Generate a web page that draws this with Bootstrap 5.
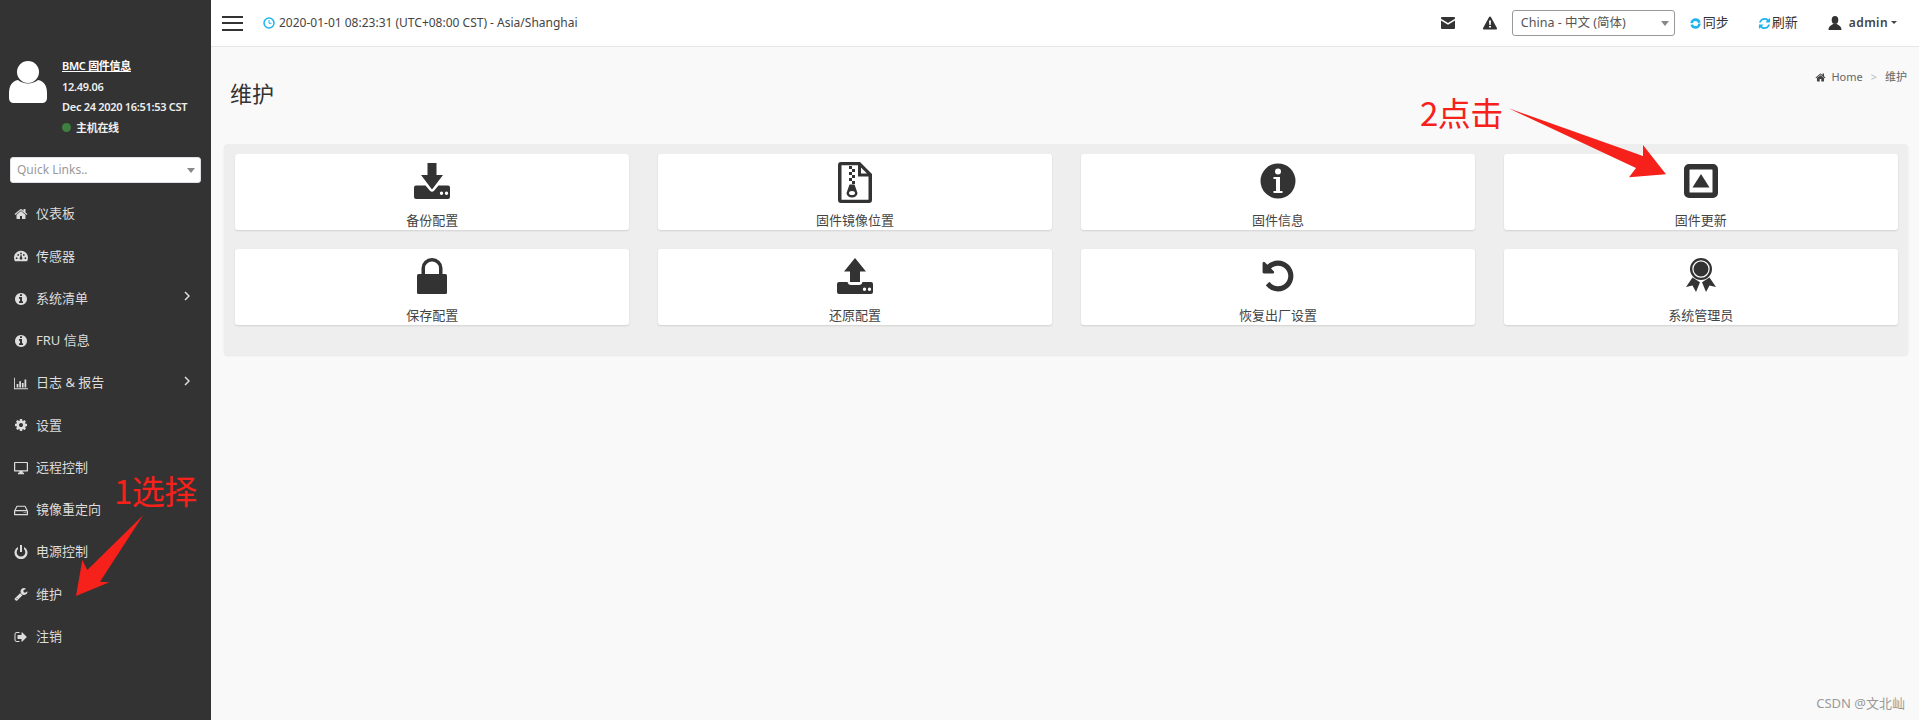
<!DOCTYPE html>
<html lang="zh-CN">
<head>
<meta charset="UTF-8">
<title>维护</title>
<link href="https://cdn.jsdelivr.net/npm/bootstrap@5.3.0/dist/css/bootstrap.min.css" rel="stylesheet">
<style>
    html, body { height: 100%; }
    body {
        font-family: "Noto Sans", "Noto Sans CJK SC", sans-serif;
        font-size: 12px;
        color: #333;
        background-color: #f9f9f9;
        overflow: hidden;
    }
    .shell { height: 720px; position: relative; }
    .side-bar { width: 211px; background-color: #333; color: #ddd; flex-shrink: 0; }
    .profile { padding: 56px 0 0 9px; height: 157px; gap: 15px; }
    .profile svg { width: 38px; height: 44px; margin-top: 5px; fill: #fff; }
    .profile-info { font-size: 11px; line-height: 20.5px; font-weight: 600; color: #eee; letter-spacing: -0.3px; }
    .profile-info a { color: #fff; }
    .status-dot { width: 9px; height: 9px; border-radius: 50%; background-color: #3f7f3f; display: inline-block; margin-right: 5px; }
    .quick-box { margin: 0 10px 10px 10px; }
    .quick-box select { height: 26px; font-size: 12px; padding: 0 6px; color: #999; border-radius: 3px; font-family: inherit; }
    .quick-box select, .lang-pick {
        background-image: url("data:image/svg+xml,%3csvg xmlns='http://www.w3.org/2000/svg' viewBox='0 0 8 5'%3e%3cpath fill='%23888' d='M0 0h8L4 5z'/%3e%3c/svg%3e");
        background-size: 8px 5px;
        background-position: right 5px center;
    }
    .side-link { height: 42.25px; padding-left: 14px; color: #ddd; font-size: 13px; text-decoration: none; }
    .side-link svg.ico { width: 14px; height: 14px; fill: #ddd; margin-right: 8px; flex-shrink: 0; }
    .side-link .chev { margin-left: auto; margin-right: 21px; margin-top: -5px; width: 6px; height: 10px; fill: none; stroke: #ddd; stroke-width: 1.5; }
    .top-bar { height: 47px; background-color: #fff; border-bottom: 1px solid #e7e7e7; padding: 0 22px 0 11px; }
    .burger { width: 21px; height: 15px; border-top: 2px solid #333; border-bottom: 2px solid #333; position: relative; margin-right: 20px; }
    .burger::after { content: ""; position: absolute; left: 0; right: 0; top: 4.5px; border-top: 2px solid #333; }
    .clock-text { font-size: 12px; color: #444; }
    .top-ico { width: 14px; height: 14px; fill: #333; }
    .lang-pick { width: 163px; height: 26px; font-size: 12.5px; padding: 0 8px; color: #555; border-color: #999; border-radius: 3px; margin: 0 14px 0 15px; font-family: inherit; }
    .sync-link { font-size: 13px; color: #333; gap: 1px; }
    .sync-link svg { width: 13px; height: 13px; fill: #1eb4f0; }
    .user-name { font-weight: 600; letter-spacing: .4px; color: #444; font-size: 12px; }
    .page-head { height: 97px; padding: 0 12px 0 19px; }
    .page-title { font-size: 22px; font-weight: 400; margin: 33px 0 0 0; color: #333; }
    .crumbs { font-size: 11px; color: #666; margin-top: 22px; gap: 8px; }
    .crumbs svg { width: 11px; height: 11px; fill: #444; margin-right: 5px; }
    .crumbs .sep { color: #bbb; }
    .tile-panel { margin: 0 11px 0 13px; height: 211px; padding: 10px 10px 0 11px; background-color: #eee; border-radius: 4px; box-shadow: 0 1px 2px rgba(0,0,0,.08); }
    .tile-row { --bs-gutter-x: 28.4px; --bs-gutter-y: 19px; }
    .tile { height: 76px; border: 0; border-radius: 3px; box-shadow: 0 1px 2px rgba(0,0,0,.12); padding-top: 9px; overflow: hidden; }
    .tile svg { width: 36px; height: 36px; fill: #333; display: block; margin: 0 auto; }
    .tile svg.tall-icon { width: 34px; height: 41px; margin-top: -1px; margin-bottom: -4px; }
    .tile-label { margin-top: 12px; font-size: 13px; line-height: 18px; color: #444; }
    .arrow-layer { position: absolute; inset: 0; width: 1919px; height: 720px; pointer-events: none; }
    .note-red { position: absolute; font-size: 33px; line-height: 1; color: #f5211a; font-family: "Noto Sans CJK SC", sans-serif; letter-spacing: -0.5px; }
    .note-one { left: 114px; top: 474px; }
    .note-two { left: 1420px; top: 96px; }
    .mark-csdn { position: absolute; right: 14px; bottom: 7px; font-size: 13px; color: #999; }
</style>
</head>
<body>
<div class="shell d-flex">
    <aside class="side-bar d-flex flex-column">
        <div class="profile d-flex">
            <svg viewBox="0 0 38 44"><circle cx="19" cy="11" r="11"/><path d="M9 19c5 4.500 15 4.500 20 0 6 1 9 6 9 13v5c0 3-2 5-5 5H5c-3 0-5-2-5-5v-5c0-7 3-12 9-13z"/></svg>
            <div class="profile-info">
                <a href="#">BMC 固件信息</a><br>
                12.49.06<br>
                Dec 24 2020 16:51:53 CST<br>
                <span class="status-dot"></span>主机在线
            </div>
        </div>
        <div class="quick-box">
            <select class="form-select"><option>Quick Links..</option></select>
        </div>
        <nav class="nav flex-column">
            <a class="side-link d-flex align-items-center" href="#"><svg class="ico" viewBox="0 0 1792 1792"><path d="M1472 992v480q0 26-19 45t-45 19h-384v-384h-256v384h-384q-26 0-45-19t-19-45v-480q0-1 .5-3t.5-3l575-474 575 474q1 2 1 6zm223-69l-62 74q-8 9-21 11h-3q-13 0-21-7l-692-577-692 577q-12 8-24 7-13-2-21-11l-62-74q-8-10-7-23.500t11-21.500l719-599q32-26 76-26t76 26l244 204v-195q0-14 9-23t23-9h192q14 0 23 9t9 23v408l219 182q10 8 11 21.500t-7 23.500z"/></svg>仪表板</a>
            <a class="side-link d-flex align-items-center" href="#"><svg class="ico" viewBox="0 0 16 16"><path fill-rule="evenodd" d="M8 2a8 8 0 0 0-8 8c0 1.500.4 2.800 1 4h14c.6-1.200 1-2.500 1-4a8 8 0 0 0-8-8zM3 9.500a1 1 0 1 1 0 2 1 1 0 0 1 0-2zm1.800-3.700a1 1 0 1 1 0 2 1 1 0 0 1 0-2zM8 4a1 1 0 1 1 0 2 1 1 0 0 1 0-2zm3.200 1.800a1 1 0 1 1 0 2 1 1 0 0 1 0-2zm1.800 3.700a1 1 0 1 1 0 2 1 1 0 0 1 0-2zM7 9.500l.6-3h.8l.6 3a1.500 1.500 0 1 1-2 0z"/></svg>传感器</a>
            <a class="side-link d-flex align-items-center" href="#"><svg class="ico" viewBox="0 0 1792 1792"><path d="M1152 1376v-160q0-14-9-23t-23-9h-96v-512q0-14-9-23t-23-9h-320q-14 0-23 9t-9 23v160q0 14 9 23t23 9h96v320h-96q-14 0-23 9t-9 23v160q0 14 9 23t23 9h448q14 0 23-9t9-23zm-128-896v-160q0-14-9-23t-23-9h-192q-14 0-23 9t-9 23v160q0 14 9 23t23 9h192q14 0 23-9t9-23zm640 416q0 209-103 385.500t-279.500 279.500-385.500 103-385.500-103-279.500-279.500-103-385.500 103-385.500 279.500-279.500 385.500-103 385.500 103 279.500 279.500 103 385.500z"/></svg>系统清单<svg class="chev" viewBox="0 0 6 10"><path d="M1 1l4 4-4 4"/></svg></a>
            <a class="side-link d-flex align-items-center" href="#"><svg class="ico" viewBox="0 0 1792 1792"><path d="M1152 1376v-160q0-14-9-23t-23-9h-96v-512q0-14-9-23t-23-9h-320q-14 0-23 9t-9 23v160q0 14 9 23t23 9h96v320h-96q-14 0-23 9t-9 23v160q0 14 9 23t23 9h448q14 0 23-9t9-23zm-128-896v-160q0-14-9-23t-23-9h-192q-14 0-23 9t-9 23v160q0 14 9 23t23 9h192q14 0 23-9t9-23zm640 416q0 209-103 385.500t-279.500 279.500-385.500 103-385.500-103-279.500-279.500-103-385.500 103-385.500 279.500-279.500 385.500-103 385.500 103 279.500 279.500 103 385.500z"/></svg>FRU 信息</a>
            <a class="side-link d-flex align-items-center" href="#"><svg class="ico" viewBox="0 0 16 14"><path d="M0 1h1v12h15v1H0zM3 8h2v4H3zM6 5h2v7H6zM9 7h2v5H9zM12 3h2v9h-2z"/></svg>日志 &amp; 报告<svg class="chev" viewBox="0 0 6 10"><path d="M1 1l4 4-4 4"/></svg></a>
            <a class="side-link d-flex align-items-center" href="#"><svg class="ico" viewBox="0 0 1792 1792"><path d="M1152 896q0-106-75-181t-181-75-181 75-75 181 75 181 181 75 181-75 75-181zm512-109v222q0 12-8 23t-20 13l-185 28q-19 54-39 91 35 50 107 138 10 12 10 25t-9 23q-27 37-99 108t-94 71q-12 0-26-9l-138-108q-44 23-91 38-16 136-29 186-7 28-36 28h-222q-14 0-24.500-8.500t-11.500-21.500l-28-184q-49-16-90-37l-141 107q-10 9-25 9-14 0-25-11-126-114-165-168-7-10-7-23 0-12 8-23 15-21 51-66.500t54-70.500q-27-50-41-99l-183-27q-13-2-21-12.500t-8-23.500v-222q0-12 8-23t19-13l186-28q14-46 39-92-40-57-107-138-10-12-10-24 0-10 9-23 26-36 98.500-107.500t94.500-71.500q13 0 26 10l138 107q44-23 91-38 16-136 29-186 7-28 36-28h222q14 0 24.500 8.500t11.500 21.500l28 184q49 16 90 37l142-107q9-9 24-9 13 0 25 10 129 119 165 170 7 8 7 22 0 12-8 23-15 21-51 66.500t-54 70.500q26 50 41 98l183 28q13 2 21 12.500t8 23.500z"/></svg>设置</a>
            <a class="side-link d-flex align-items-center" href="#"><svg class="ico" viewBox="0 0 16 14"><path fill-rule="evenodd" d="M1 0h14a1 1 0 0 1 1 1v9a1 1 0 0 1-1 1H10v1.500h1.500V14h-7v-1.500H6V11H1a1 1 0 0 1-1-1V1a1 1 0 0 1 1-1zm.4 1.400v8.200h13.200V1.400z"/></svg>远程控制</a>
            <a class="side-link d-flex align-items-center" href="#"><svg class="ico" viewBox="0 0 16 14"><path fill-rule="evenodd" d="M3 2h10l3 6v4a1 1 0 0 1-1 1H1a1 1 0 0 1-1-1V8zm.8 1.300L1.900 7h12.200l-1.900-3.700zM1.400 8.400v3.200h13.200V8.400zM11 9.500h1.200v1H11zm2 0h1v1h-1z"/></svg>镜像重定向</a>
            <a class="side-link d-flex align-items-center" href="#"><svg class="ico" viewBox="0 0 14 14"><path d="M6 0h2v7H6z"/><path d="M4 1.900v2.200a4.300 4.300 0 1 0 6 0V1.900a6.500 6.500 0 1 1-6 0z"/></svg>电源控制</a>
            <a class="side-link d-flex align-items-center" href="#"><svg class="ico" viewBox="0 0 1792 1792"><path d="M448 1472q0-26-19-45t-45-19-45 19-19 45 19 45 45 19 45-19 19-45zm644-420l-682 682q-37 37-90 37-52 0-91-37l-106-108q-38-36-38-90 0-53 38-91l681-681q39 98 114.500 173.500t173.500 114.500zm634-435q0 39-23 106-47 134-164.500 217.500t-258.500 83.500q-185 0-316.500-131.500t-131.500-316.500 131.500-316.500 316.500-131.500q58 0 121.500 16.500t107.500 46.500q16 11 16 28t-16 28l-293 169v224l193 107q5-3 79-48.500t135.500-81 70.500-35.500q15 0 23.500 10t8.500 25z"/></svg>维护</a>
            <a class="side-link d-flex align-items-center" href="#"><svg class="ico" viewBox="0 0 1792 1792"><path d="M704 1440q0 4 1 20t.5 26.500-3 23.500-10 19.500-20.500 6.500h-320q-119 0-203.500-84.500t-84.500-203.500v-704q0-119 84.500-203.500t203.500-84.500h320q13 0 22.500 9.500t9.500 22.500q0 4 1 20t.5 26.500-3 23.500-10 19.500-20.500 6.500h-320q-66 0-113 47t-47 113v704q0 66 47 113t113 47h312l11.500 1 11.500 3 8 5.500 7 9 2 13.500zm928-544q0 26-19 45l-544 544q-19 19-45 19t-45-19-19-45v-288h-448q-26 0-45-19t-19-45v-384q0-26 19-45t45-19h448v-288q0-26 19-45t45-19 45 19l544 544q19 19 19 45z"/></svg>注销</a>
        </nav>
    </aside>

    <main class="flex-grow-1">
        <header class="top-bar d-flex align-items-center">
            <span class="burger"></span>
            <svg class="me-1" width="12" height="12" viewBox="0 0 12 12" fill="none" stroke="#1eb4f0" stroke-width="1.500"><circle cx="6" cy="6" r="5"/><path d="M6 3v3.300h2.500" stroke-width="1"/></svg>
            <span class="clock-text">2020-01-01 08:23:31 (UTC+08:00 CST) - Asia/Shanghai</span>
            <div class="ms-auto d-flex align-items-center">
                <svg class="top-ico" viewBox="0 0 14 12"><path d="M0 1a1 1 0 0 1 1-1h12a1 1 0 0 1 1 1v.800L7 6 0 1.800z"/><path d="M0 3.500L7 7.700l7-4.200V11a1 1 0 0 1-1 1H1a1 1 0 0 1-1-1z"/></svg>
                <svg class="top-ico" style="margin-left:28px" viewBox="0 0 14 13"><path fill-rule="evenodd" d="M7 0c.4 0 .7.200.9.500l6 11c.3.700-.1 1.500-.9 1.500H1c-.8 0-1.200-.8-.9-1.500l6-11C6.300.2 6.600 0 7 0zM6 4l.3 4.500h1.400L8 4zm0 5.500V11h2V9.500z"/></svg>
                <select class="form-select lang-pick"><option>China - 中文 (简体)</option></select>
                <a class="sync-link d-flex align-items-center text-decoration-none" href="#"><svg viewBox="0 0 12 12"><circle cx="6" cy="6" r="3.600" fill="none" stroke="#1eb4f0" stroke-width="2.400" stroke-dasharray="10 1.300"/></svg>同步</a>
                <a class="sync-link d-flex align-items-center text-decoration-none" style="margin-left:29px" href="#"><svg viewBox="0 0 1792 1792"><path d="M1639 1056q0 5-1 7-64 268-268 434.500t-478 166.500q-146 0-282.500-55t-243.500-157l-129 129q-19 19-45 19t-45-19-19-45v-448q0-26 19-45t45-19h448q26 0 45 19t19 45-19 45l-137 137q71 66 161 102t187 36q134 0 250-65t186-179q11-17 53-117 8-23 30-23h192q13 0 22.500 9.500t9.500 22.500zm25-800v448q0 26-19 45t-45 19h-448q-26 0-45-19t-19-45 19-45l138-138q-148-137-349-137-134 0-250 65t-186 179q-11 17-53 117-8 23-30 23h-199q-13 0-22.500-9.500t-9.500-22.500v-7q65-268 270-434.500t480-166.500q146 0 284 55.500t245 156.500l130-129q19-19 45-19t45 19 19 45z"/></svg>刷新</a>
                <svg class="top-ico" style="margin-left:30px;margin-right:7px" viewBox="0 0 14 14"><ellipse cx="7" cy="4" rx="3.300" ry="4"/><path d="M5 7.500c1 .8 3 .8 4 0 .3 2 4.500 1.500 4.500 6.500H.5c0-5 4.200-4.500 4.500-6.500z"/></svg>
                <span class="user-name dropdown-toggle">admin</span>
            </div>
        </header>

        <div class="page-head d-flex justify-content-between">
            <h1 class="page-title">维护</h1>
            <div class="crumbs d-flex align-items-start">
                <span class="d-flex align-items-center"><svg viewBox="0 0 1792 1792"><path d="M1472 992v480q0 26-19 45t-45 19h-384v-384h-256v384h-384q-26 0-45-19t-19-45v-480q0-1 .5-3t.5-3l575-474 575 474q1 2 1 6zm223-69l-62 74q-8 9-21 11h-3q-13 0-21-7l-692-577-692 577q-12 8-24 7-13-2-21-11l-62-74q-8-10-7-23.500t11-21.500l719-599q32-26 76-26t76 26l244 204v-195q0-14 9-23t23-9h192q14 0 23 9t9 23v408l219 182q10 8 11 21.500t-7 23.500z"/></svg>Home</span>
                <span class="sep">&gt;</span>
                <span>维护</span>
            </div>
        </div>

        <section class="tile-panel">
            <div class="row tile-row">
                <div class="col-3"><div class="card tile text-center">
                    <svg viewBox="0 0 36 36"><path d="M13.500 0h9v12H29L18 26.500 7 12h6.500z"/><path fill-rule="evenodd" d="M2 22.500h9.500l4.700 5.500c1 1.100 2.600 1.100 3.600 0l4.700-5.500H34a2 2 0 0 1 2 2V34a2 2 0 0 1-2 2H2a2 2 0 0 1-2-2v-9.500a2 2 0 0 1 2-2zm25.500 6a1.700 1.700 0 1 0 0 3.400 1.700 1.700 0 0 0 0-3.400zm5 0a1.700 1.700 0 1 0 0 3.400 1.700 1.700 0 0 0 0-3.400z"/></svg>
                    <div class="tile-label">备份配置</div>
                </div></div>
                <div class="col-3"><div class="card tile text-center">
                    <svg class="tall-icon" viewBox="0 0 34 41"><path fill-rule="evenodd" d="M3 0h19l12 12v26a3 3 0 0 1-3 3H3a3 3 0 0 1-3-3V3a3 3 0 0 1 3-3zm.5 3.300v34.400h27V14.500H20V3.300zM23 5.500V11.500h6z"/><path d="M11 4h3v3h-3zM14 7h3v3h-3zM11 10h3v3h-3zM14 13h3v3h-3zM11 16h3v3h-3zM14 19h3v3h-3z"/><path fill-rule="evenodd" d="M11.500 22.500h5L19.500 31a5.500 4.500 0 1 1-11 0zM14 29a3 2 0 1 0 0 4 3 2 0 0 0 0-4z"/></svg>
                    <div class="tile-label">固件镜像位置</div>
                </div></div>
                <div class="col-3"><div class="card tile text-center">
                    <svg viewBox="0 0 36 36"><path fill-rule="evenodd" d="M18 .5a17.500 17.500 0 1 1 0 35 17.500 17.500 0 0 1 0-35zM18 5.500a3 3 0 1 0 0 6 3 3 0 0 0 0-6zm-4.500 8.500v2h2.500v12h-2.500v2h9v-2H20V14z"/></svg>
                    <div class="tile-label">固件信息</div>
                </div></div>
                <div class="col-3"><div class="card tile text-center">
                    <svg viewBox="0 0 36 36"><path fill-rule="evenodd" d="M6 1h24a5 5 0 0 1 5 5v24a5 5 0 0 1-5 5H6a5 5 0 0 1-5-5V6a5 5 0 0 1 5-5zm1 5.500a.5.5 0 0 0-.5.500v22a.5.5 0 0 0 .5.500h22a.5.5 0 0 0 .5-.500V7a.5.5 0 0 0-.5-.500z"/><path d="M18 11L26.500 24.500h-17z"/></svg>
                    <div class="tile-label">固件更新</div>
                </div></div>
                <div class="col-3"><div class="card tile text-center">
                    <svg viewBox="0 0 36 36"><path d="M7.500 16v-6a10.500 10 0 0 1 21 0v6h-3.500v-6a7 6.500 0 0 0-14 0v6z"/><rect x="3" y="16" width="30" height="20" rx="1.500"/></svg>
                    <div class="tile-label">保存配置</div>
                </div></div>
                <div class="col-3"><div class="card tile text-center">
                    <svg viewBox="0 0 36 36"><path d="M18 0l11 13.500h-6V24h-10V13.500H7z"/><path fill-rule="evenodd" d="M2 24h8.500c.5 2 1.500 3 3.500 3h8c2 0 3-1 3.500-3H34a2 2 0 0 1 2 2v8a2 2 0 0 1-2 2H2a2 2 0 0 1-2-2v-8a2 2 0 0 1 2-2zm25.500 5.500a1.700 1.700 0 1 0 0 3.400 1.700 1.700 0 0 0 0-3.400zm5 0a1.700 1.700 0 1 0 0 3.400 1.700 1.700 0 0 0 0-3.400z"/></svg>
                    <div class="tile-label">还原配置</div>
                </div></div>
                <div class="col-3"><div class="card tile text-center">
                    <svg viewBox="0 0 1792 1792"><path d="M1664 896q0 156-61 298t-164 245-245 164-298 61q-172 0-327-72.500t-264-204.500q-7-10-6.500-22.500t8.500-20.500l137-138q10-9 25-9 16 2 23 12 73 95 179 147t225 52q104 0 198.500-40.500t163.500-109.500 109.500-163.500 40.500-198.500-40.500-198.500-109.500-163.500-163.500-109.500-198.500-40.500q-98 0-188 35.500t-160 101.500l137 138q31 30 14 69-17 40-59 40h-448q-26 0-45-19t-19-45v-448q0-42 40-59 39-17 69 14l130 129q107-101 244.500-156.500t284.500-55.500q156 0 298 61t245 164 164 245 61 298z"/></svg>
                    <div class="tile-label">恢复出厂设置</div>
                </div></div>
                <div class="col-3"><div class="card tile text-center">
                    <svg viewBox="-3 0 36 36"><path fill-rule="evenodd" d="M15 0a11 11 0 1 1 0 22 11 11 0 0 1 0-22zm0 2.300a8.700 8.700 0 1 0 0 17.400 8.700 8.700 0 0 0 0-17.400zm0 1.200a7.500 7.500 0 1 1 0 15 7.500 7.500 0 0 1 0-15z"/><path d="M6.500 19.500l7.500 4.700-4 9.800-3.500-6.500L0 29zM23.500 19.500L16 24.200l4 9.800 3.500-6.500L30 29z"/></svg>
                    <div class="tile-label">系统管理员</div>
                </div></div>
            </div>
        </section>
    </main>

    <!-- red annotations drawn over the page -->
    <svg class="arrow-layer" viewBox="0 0 1919 720" fill="#f5211a">
        <polygon points="143.300,515 100,581.700 109.300,582.300 76,596 82.300,560 87.300,570"/>
        <polygon points="1508.500,108.300 1643,156 1643,145 1666,174.300 1629,177.300 1636,168"/>
    </svg>
    <div class="note-red note-one">1选择</div>
    <div class="note-red note-two">2点击</div>
    <div class="mark-csdn">CSDN @文北屾</div>
</div>
<script src="https://cdn.jsdelivr.net/npm/bootstrap@5.3.0/dist/js/bootstrap.bundle.min.js"></script>
</body>
</html>
